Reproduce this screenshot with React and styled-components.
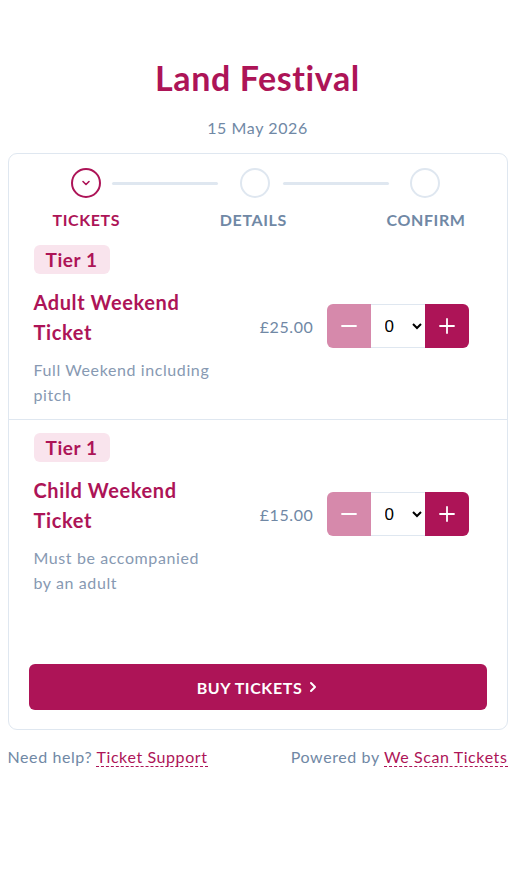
import React, { useState } from "react";
import styled, { createGlobalStyle } from "styled-components";

const pink = "#ad1457";
const slate = "#7088a5";
const line = "#dfe7f0";

const GlobalStyle = createGlobalStyle`
  * {
    box-sizing: border-box;
  }
  body {
    margin: 0;
    background: #fff;
    font-family: Lato, "Open Sans", sans-serif;
    letter-spacing: 0.6px;
    color: ${slate};
  }
`;

const Page = styled.div`
  max-width: 500px;
  margin: 0 auto;
  padding-top: 58px;
`;

const Title = styled.h1`
  margin: 0;
  text-align: center;
  font-size: 34px;
  font-weight: 700;
  line-height: 40px;
  letter-spacing: 0.6px;
  color: ${pink};
`;

const EventDate = styled.p`
  margin: 20px 0 15px;
  text-align: center;
  font-size: 16px;
  line-height: 20px;
  color: ${slate};
`;

const Card = styled.div`
  border: 1px solid ${line};
  border-radius: 9px;
  padding-bottom: 19px;
`;

const Track = styled.div`
  display: flex;
  align-items: center;
  padding: 14px 67px 0 62px;
`;

const Circle = styled.div`
  flex: 0 0 30px;
  height: 30px;
  border-radius: 50%;
  border: 2px solid ${(p) => (p.$active ? pink : line)};
  display: flex;
  align-items: center;
  justify-content: center;
`;

const Connector = styled.div`
  flex: 1;
  height: 3px;
  border-radius: 2px;
  background: ${line};
  margin: 0 ${(p) => p.$right}px 0 ${(p) => p.$left}px;
`;

const Labels = styled.div`
  display: flex;
  justify-content: space-between;
  padding: 12px 41px 0 44px;
`;

const StepLabel = styled.span`
  font-size: 16px;
  font-weight: 700;
  line-height: 20px;
  text-transform: uppercase;
  color: ${(p) => (p.$active ? pink : slate)};
`;

const Item = styled.div`
  display: flex;
  justify-content: space-between;
  align-items: center;
  padding: ${(p) => (p.$first ? "15px" : "13px")} 38px 12px 25px;
  border-top: ${(p) => (p.$first ? "none" : `1px solid ${line}`)};
`;

const Info = styled.div`
  width: 186px;
`;

const Badge = styled.span`
  display: inline-block;
  padding: 0 12px;
  height: 29px;
  line-height: 29px;
  border-radius: 6px;
  background: #f9e4ed;
  color: ${pink};
  font-size: 19px;
  font-weight: 700;
`;

const Name = styled.h2`
  margin: 13px 0 0;
  font-size: 20px;
  font-weight: 700;
  line-height: 30px;
  color: ${pink};
`;

const Description = styled.p`
  margin: 10px 0 0;
  font-size: 16px;
  line-height: 25px;
  color: #8799b2;
`;

const Buy = styled.div`
  display: flex;
  align-items: center;
  gap: 13px;
`;

const Price = styled.span`
  font-size: 16px;
  color: ${slate};
`;

const Stepper = styled.div`
  display: flex;
  height: 44px;
`;

const StepButton = styled.button`
  width: 44px;
  border: none;
  padding: 0;
  color: #fff;
  background: ${(p) => (p.$minus ? "#d689ab" : pink)};
  border-radius: ${(p) => (p.$minus ? "6px 0 0 6px" : "0 6px 6px 0")};
  display: flex;
  align-items: center;
  justify-content: center;
  cursor: pointer;
`;

const Qty = styled.select`
  width: 54px;
  border: 1px solid ${line};
  border-left: none;
  border-right: none;
  border-radius: 0;
  background: #fff;
  font-family: Arial, "Liberation Sans", sans-serif;
  font-size: 17px;
  color: #000;
  padding: 0 4px 0 10px;
  outline: none;
`;

const Actions = styled.div`
  padding: 57px 20px 0;
`;

const BuyButton = styled.button`
  width: 100%;
  height: 46px;
  border: none;
  border-radius: 6px;
  background: ${pink};
  color: #fff;
  font-family: inherit;
  font-size: 16px;
  font-weight: 700;
  letter-spacing: 0.6px;
  text-transform: uppercase;
  display: flex;
  align-items: center;
  justify-content: center;
  gap: 6px;
  cursor: pointer;
`;

const Footer = styled.div`
  display: flex;
  justify-content: space-between;
  margin-top: 16px;
  font-size: 16px;
  line-height: 22px;
  color: ${slate};
`;

const FooterLink = styled.a`
  color: ${pink};
  text-decoration: none;
  border-bottom: 1px dashed ${pink};
`;

const Plus = ({ minus }) => (
  <svg width="16" height="16" viewBox="0 0 16 16" stroke="#fff" strokeWidth="1.8" strokeLinecap="round">
    <line x1="1" y1="8" x2="15" y2="8" />
    {!minus && <line x1="8" y1="1" x2="8" y2="15" />}
  </svg>
);

const tickets = [
  {
    tier: "Tier 1",
    name: "Adult Weekend Ticket",
    description: "Full Weekend including pitch",
    price: "£25.00",
  },
  {
    tier: "Tier 1",
    name: "Child Weekend Ticket",
    description: "Must be accompanied by an adult",
    price: "£15.00",
  },
];

const TicketRow = ({ ticket, first }) => {
  const [count, setCount] = useState(0);
  return (
    <Item $first={first}>
      <Info>
        <Badge>{ticket.tier}</Badge>
        <Name>{ticket.name}</Name>
        <Description>{ticket.description}</Description>
      </Info>
      <Buy>
        <Price>{ticket.price}</Price>
        <Stepper>
          <StepButton $minus onClick={() => setCount(Math.max(0, count - 1))}>
            <Plus minus />
          </StepButton>
          <Qty value={count} onChange={(e) => setCount(Number(e.target.value))}>
            {[0, 1, 2, 3, 4, 5, 6, 7, 8, 9, 10].map((n) => (
              <option key={n} value={n}>
                {n}
              </option>
            ))}
          </Qty>
          <StepButton onClick={() => setCount(Math.min(10, count + 1))}>
            <Plus />
          </StepButton>
        </Stepper>
      </Buy>
    </Item>
  );
};

const App = () => (
  <Page>
    <GlobalStyle />
    <Title>Land Festival</Title>
    <EventDate>15 May 2026</EventDate>
    <Card>
      <Track>
        <Circle $active>
          <svg width="10" height="8" viewBox="0 0 10 8" fill="none" stroke={pink} strokeWidth="1.6" strokeLinecap="round" strokeLinejoin="round">
            <polyline points="2,2.5 5,5.5 8,2.5" />
          </svg>
        </Circle>
        <Connector $left={11} $right={22} />
        <Circle />
        <Connector $left={13} $right={21} />
        <Circle />
      </Track>
      <Labels>
        <StepLabel $active>Tickets</StepLabel>
        <StepLabel>Details</StepLabel>
        <StepLabel>Confirm</StepLabel>
      </Labels>
      {tickets.map((t, i) => (
        <TicketRow key={t.name} ticket={t} first={i === 0} />
      ))}
      <Actions>
        <BuyButton>
          Buy Tickets
          <svg width="10" height="12" viewBox="0 0 10 12" fill="none" stroke="#fff" strokeWidth="2" strokeLinecap="round" strokeLinejoin="round">
            <polyline points="3,2 7,6 3,10" />
          </svg>
        </BuyButton>
      </Actions>
    </Card>
    <Footer>
      <span>
        Need help? <FooterLink href="#">Ticket Support</FooterLink>
      </span>
      <span>
        Powered by <FooterLink href="#">We Scan Tickets</FooterLink>
      </span>
    </Footer>
  </Page>
);

export default App;
